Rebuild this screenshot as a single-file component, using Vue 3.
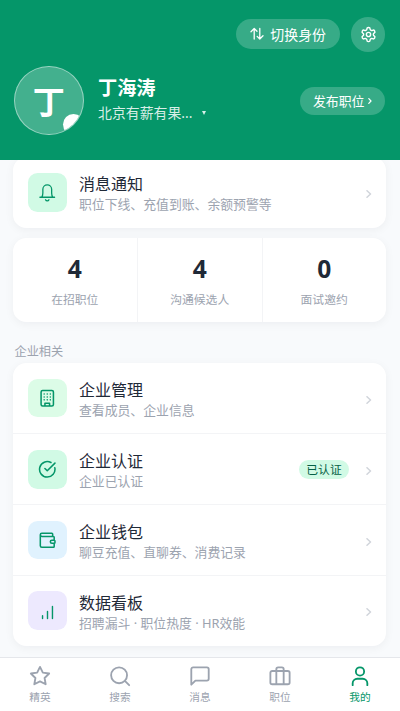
<script setup>
const P = {
  bell: 'M2.500 18.500h19M4.800 18.500c1-1.500 1.500-3 1.500-5.500V8.200a5.700 5.700 0 0 1 11.400 0V13c0 2.500 .5 4 1.500 5.500M9.800 21.700a2.400 2.400 0 0 0 4.400 0',
  building: 'M6 2h12a2 2 0 0 1 2 2v16a2 2 0 0 1-2 2H6a2 2 0 0 1-2-2V4a2 2 0 0 1 2-2zM9 22v-3.500h6V22M8 6.500h.01M12 6.500h.01M16 6.500h.01M8 10.300h.01M12 10.300h.01M16 10.300h.01M8 14.100h.01M12 14.100h.01M16 14.100h.01',
  check: 'M21.800 10a10 10 0 1 1-5-6.700M9 11l3 3L22 4',
  wallet: 'M19 7V4a1 1 0 0 0-1-1H5a2 2 0 0 0 0 4h15a1 1 0 0 1 1 1v4h-3a2 2 0 0 0 0 4h3a1 1 0 0 0 1-1v-2a1 1 0 0 0-1-1M3 5v14a2 2 0 0 0 2 2h15a1 1 0 0 0 1-1v-4',
  chart: 'M5 20.500v-4M12 20.500V10.500M19 20.500V3.500',
  star: 'M12 2l3.100 6.300 6.900 1-5 4.900 1.200 6.800-6.200-3.200L5.800 21 7 14.200 2 9.300l6.900-1z',
  search: 'M11 2.500a8.700 8.700 0 1 0 0 17.400a8.700 8.700 0 1 0 0-17.400zM22 22l-4.700-4.700',
  message: 'M21.500 15a2 2 0 0 1-2 2H7l-4.500 4.500V4.500a2 2 0 0 1 2-2h15a2 2 0 0 1 2 2z',
  bag: 'M3.500 6.500h17a2 2 0 0 1 2 2V19a2 2 0 0 1-2 2h-17a2 2 0 0 1-2-2V8.500a2 2 0 0 1 2-2zM8 21V4.500a2 2 0 0 1 2-2h4a2 2 0 0 1 2 2V21',
  user: 'M12 2.500a4.500 4.500 0 1 0 0 9a4.500 4.500 0 1 0 0-9zM4 22v-2a5 5 0 0 1 5-5h6a5 5 0 0 1 5 5v2'
}
const stats = [
  { n: 4, label: '在招职位' },
  { n: 4, label: '沟通候选人' },
  { n: 0, label: '面试邀约' }
]
const notice = [{ icon: 'bell', tone: 'mint', title: '消息通知', sub: '职位下线、充值到账、余额预警等' }]
const company = [
  { icon: 'building', tone: 'green', title: '企业管理', sub: '查看成员、企业信息' },
  { icon: 'check', tone: 'mint', title: '企业认证', sub: '企业已认证', badge: '已认证' },
  { icon: 'wallet', tone: 'blue', title: '企业钱包', sub: '聊豆充值、直聊券、消费记录' },
  { icon: 'chart', tone: 'violet', title: '数据看板', sub: '招聘漏斗 · 职位热度 · HR效能' }
]
const groups = [{ id: 'notice', rows: notice }, { id: 'company', rows: company }]
const tabs = [
  { icon: 'star', label: '精英' },
  { icon: 'search', label: '搜索' },
  { icon: 'message', label: '消息' },
  { icon: 'bag', label: '职位' },
  { icon: 'user', label: '我的', active: true }
]
</script>

<template>
  <div class="page">
    <header class="header">
      <div class="actions">
        <button class="switch">
          <svg class="swap" viewBox="0 0 14 14"><path d="M4.200 12V1.500M1 4.700l3.200-3.200L7 4.300M9.800 1.500V12M7.200 9.400L9.800 12l3.200-3.200" /></svg>
          <span>切换身份</span>
        </button>
        <button class="gear">
          <svg viewBox="0 0 24 24"><path d="M12.220 2h-.44a2 2 0 0 0-2 2v.18a2 2 0 0 1-1 1.730l-.43.25a2 2 0 0 1-2 0l-.15-.08a2 2 0 0 0-2.730.73l-.22.38a2 2 0 0 0 .73 2.730l.15.1a2 2 0 0 1 1 1.720v.51a2 2 0 0 1-1 1.740l-.15.09a2 2 0 0 0-.73 2.730l.22.38a2 2 0 0 0 2.730.73l.15-.08a2 2 0 0 1 2 0l.43.25a2 2 0 0 1 1 1.730V20a2 2 0 0 0 2 2h.44a2 2 0 0 0 2-2v-.18a2 2 0 0 1 1-1.730l.43-.25a2 2 0 0 1 2 0l.15.08a2 2 0 0 0 2.730-.73l.22-.39a2 2 0 0 0-.73-2.730l-.15-.08a2 2 0 0 1-1-1.740v-.5a2 2 0 0 1 1-1.740l.15-.09a2 2 0 0 0 .73-2.730l-.22-.38a2 2 0 0 0-2.730-.73l-.15.08a2 2 0 0 1-2 0l-.43-.25a2 2 0 0 1-1-1.730V4a2 2 0 0 0-2-2z" /><circle cx="12" cy="12" r="3" /></svg>
        </button>
      </div>
      <div class="profile">
        <div class="avatar"><span>丁</span><i class="dot"></i></div>
        <div class="who">
          <div class="name">丁海涛</div>
          <div class="org"><span>北京有薪有果...</span><svg class="caret" viewBox="0 0 4 4"><path d="M0 0h4L2 4z" /></svg></div>
        </div>
        <button class="publish"><span>发布职位</span><svg viewBox="0 0 4 6"><path d="M.8.600L3 3 .8 5.400" /></svg></button>
      </div>
    </header>

    <main class="main">
      <template v-for="g in groups" :key="g.id">
        <h2 v-if="g.id === 'company'" class="section">企业相关</h2>
        <section class="card">
          <div v-for="r in g.rows" :key="r.title" class="row">
            <div class="tile" :class="r.tone">
              <svg :class="r.icon" viewBox="0 0 24 24"><path :d="P[r.icon]" /></svg>
            </div>
            <div class="copy">
              <div class="title">{{ r.title }}</div>
              <div class="sub">{{ r.sub }}</div>
            </div>
            <span v-if="r.badge" class="badge">{{ r.badge }}</span>
            <svg class="chev" viewBox="0 0 6 8"><path d="M1 .700L4.500 4 1 7.300" /></svg>
          </div>
        </section>
        <section v-if="g.id === 'notice'" class="card stats">
          <div v-for="s in stats" :key="s.label" class="stat">
            <div class="num">{{ s.n }}</div>
            <div class="lab">{{ s.label }}</div>
          </div>
        </section>
      </template>
    </main>

    <nav class="tabs">
      <div v-for="t in tabs" :key="t.label" class="tab" :class="{ active: t.active }">
        <svg viewBox="0 0 24 24"><path :d="P[t.icon]" /></svg>
        <span>{{ t.label }}</span>
      </div>
    </nav>
  </div>
</template>

<style>
body { background: #f8fafc; }
</style>

<style scoped>
.page {
  height: 711px;
  overflow: hidden;
  display: flex;
  flex-direction: column;
  background: #f8fafc;
  font-family: "Noto Sans", "Noto Sans CJK SC", sans-serif;
  color: #1f2937;
}
.page * { box-sizing: border-box; }
svg { display: block; flex: none; fill: none; stroke: currentColor; stroke-width: 2; stroke-linecap: round; stroke-linejoin: round; }
button { border: 0; margin: 0; padding: 0; font: inherit; color: #fff; background: rgba(255, 255, 255, .2); display: flex; align-items: center; justify-content: center; flex: none; }
.header { position: relative; z-index: 1; flex: none; height: 160px; padding: 17px 14.600px 0 14px; background: #059669; color: #fff; }
.actions { display: flex; justify-content: flex-end; align-items: center; gap: 11px; }
.switch { width: 103.500px; height: 30px; border-radius: 15px; font-size: 13.900px; gap: 6px; }
.swap { width: 14px; height: 14px; stroke-width: 1.300; }
.gear { width: 34.500px; height: 34.500px; border-radius: 50%; }
.gear svg { width: 17px; height: 17px; }
.profile { display: flex; align-items: center; margin-top: 14.500px; height: 69px; }
.avatar { position: relative; width: 69.500px; height: 69px; border-radius: 50%; border: 1px solid rgba(255, 255, 255, .45); background: rgba(255, 255, 255, .25); overflow: hidden; display: flex; align-items: center; justify-content: center; font-size: 32px; font-weight: 700; }
.avatar span { margin-top: -2px; }
.dot { position: absolute; right: -1px; bottom: -1px; width: 21px; height: 21px; border-radius: 50%; background: #fff; }
.who { flex: 1; padding: 0 0 2px 14.500px; }
.name { font-size: 19.200px; line-height: 26px; font-weight: 700; }
.org { display: flex; align-items: center; font-size: 13.900px; line-height: 24px; color: rgba(255, 255, 255, .85); gap: 9px; }
.caret { width: 4px; height: 4px; fill: currentColor; stroke: none; }
.publish { width: 85.500px; height: 28px; border-radius: 14px; font-size: 12.900px; gap: 4px; }
.publish span { margin-top: -1px; }
.publish svg { width: 4px; height: 6px; stroke-width: 1.200; }
.main { flex: 1; min-height: 0; padding: 0 13.600px 0 13px; margin-top: -3px; }
.card { background: #fff; border-radius: 13.300px; box-shadow: 0 2px 10px rgba(15, 23, 42, .05); overflow: hidden; }
.row { height: 70.700px; padding: 0 14.700px 0 14.700px; display: flex; align-items: center; border-top: 1px solid #f3f4f6; }
.row:first-child { border-top: 0; }
.tile { width: 39px; height: 38.600px; border-radius: 9.600px; display: flex; align-items: center; justify-content: center; color: #059669; }
.tile svg { width: 18.500px; height: 18.500px; }
.tile .bell { stroke-width: 1.700; }
.tile .chart { width: 17px; height: 17px; margin-top: 3px; }
.mint { background: #d1fae5; }
.green { background: #dcfce7; }
.blue { background: #e0f2fe; }
.violet { background: #ede9fe; }
.copy { flex: 1; padding: 2px 0 0 12.300px; }
.title { font-size: 16px; line-height: 22px; }
.sub { font-size: 12.850px; line-height: 18px; color: #9ca3af; }
.badge { font-size: 11.800px; line-height: 19px; padding: 0 7px; border-radius: 10px; background: #d1fae5; color: #065f46; margin-right: 17px; }
.chev { width: 6px; height: 8px; margin-top: 3px; stroke-width: 1.500; color: #d1d5db; }
.stats { margin-top: 10.600px; height: 83.500px; display: grid; grid-template-columns: repeat(3, 1fr); }
.stat { text-align: center; padding-top: 15px; border-left: 1px solid #f3f4f6; }
.stat:first-child { border-left: 0; }
.num { font-size: 24.600px; line-height: 32px; font-weight: 700; }
.lab { font-size: 11.800px; line-height: 18px; margin-top: 5px; color: #9ca3af; }
.stat .num, .stat .lab { margin-left: -1px; }
.section { margin: 21px 0 2px 1.500px; font-size: 12.200px; line-height: 18px; font-weight: 400; color: #9ca3af; }
.tabs { position: relative; z-index: 1; flex: none; height: 54px; display: flex; background: #fff; border-top: 1px solid #e5e7eb; }
.tab { flex: 1; display: flex; flex-direction: column; align-items: center; padding-top: 7px; color: #9ca3af; font-size: 10.700px; line-height: 16px; }
.tab svg { width: 22px; height: 22px; stroke-width: 2; margin-bottom: 2px; }
.tab.active { color: #059669; }
</style>
